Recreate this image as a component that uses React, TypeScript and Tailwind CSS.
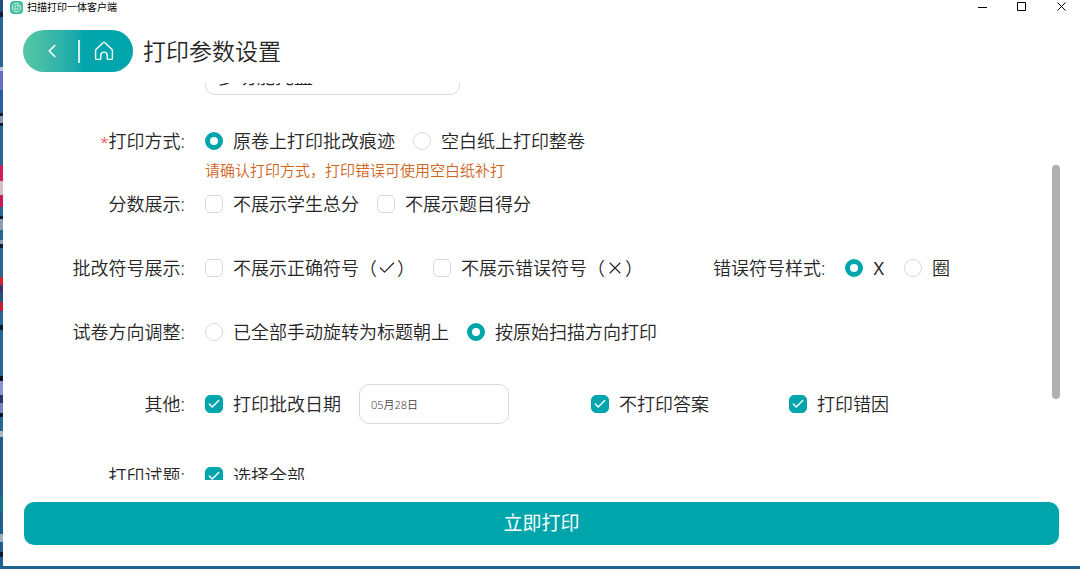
import React from 'react';
import { Check, ChevronLeft, X } from 'lucide-react';

// Sliver of the desktop that shows to the left of the window
const desktop = [
  'h-[12px] bg-[#1d4f80]',
  'h-[5px] bg-[#101c33]',
  'h-[50px] bg-[#2a6496]',
  'h-[4px] bg-[#b9c4dc]',
  'h-[19px] bg-[#6570c4]',
  'h-[23px] bg-[#2b5f9b]',
  'h-[3px] bg-[#0d1b33]',
  'h-[7px] bg-[#8496ad]',
  'h-[3px] bg-[#0d1b33]',
  'h-[39px] bg-[#256795]',
  'h-[16px] bg-[#d01c5c]',
  'h-[14px] bg-[#d9bccb]',
  'h-[12px] bg-[#c8185a]',
  'h-[9px] bg-[#256795]',
  'h-[3px] bg-[#0d1b33]',
  'h-[11px] bg-[#8a9db3]',
  'h-[10px] bg-[#256795]',
  'h-[4px] bg-[#8a9db3]',
  'h-[4px] bg-[#0d1b33]',
  'h-[29px] bg-[#256795]',
  'h-[8px] bg-[#d3222f]',
  'h-[7px] bg-[#3b3464]',
  'h-[10px] bg-[#2b4f80]',
  'h-[9px] bg-[#c41f30]',
  'h-[14px] bg-[#256795]',
  'h-[5px] bg-[#101c2c]',
  'h-[46px] bg-[#256795]',
  'h-[5px] bg-[#0d1326]',
  'h-[14px] bg-[#8f90cf]',
  'h-[8px] bg-[#2a3564]',
  'h-[10px] bg-[#7d82c4]',
  'h-[4px] bg-[#0d1326]',
  'h-[14px] bg-[#256795]',
  'h-[6px] bg-[#a9b7c6]',
  'h-[58px] bg-[#205f8d]',
  'h-[17px] bg-[#12758a]',
  'h-[22px] bg-[#205f8d]',
  'h-[8px] bg-[#9cb0c4]',
  'h-[10px] bg-[#205f8d]',
  'h-[5px] bg-[#0d1b33]',
];

const AppLogo = () => (
  <svg viewBox="0 0 26 26" className="size-[13px]" aria-hidden="true">
    <rect width="26" height="26" rx="8" fill="#45bd9d" />
    <circle cx="13" cy="13" r="8.5" fill="none" stroke="#d8fff2" strokeWidth="2" />
    <path d="M9.5 16.5v-4a3.5 3.5 0 0 1 3.5-3.5h3.5v4a3.5 3.5 0 0 1-3.5 3.5z" fill="none" stroke="#d8fff2" strokeWidth="2" />
  </svg>
);

const HomeIcon = () => (
  <svg viewBox="0 0 20 20" className="size-5" fill="none" stroke="currentColor" strokeWidth="1.4" strokeLinejoin="round" strokeLinecap="round" aria-hidden="true">
    <path d="M9.3 1.6 2.2 8.3c-.4.4-.6.8-.6 1.3v7.6c0 .7.5 1.2 1.2 1.2h3c.6 0 1-.4 1-1v-3.1a3.2 3.2 0 0 1 6.4 0v3.1c0 .6.4 1 1 1h3c.7 0 1.2-.5 1.2-1.2V9.6c0-.5-.2-.9-.6-1.3L10.7 1.6c-.4-.4-1-.4-1.4 0z" />
  </svg>
);

type OptionProps = {
  children: React.ReactNode;
  checked?: boolean;
};

const CheckOption = ({ children, checked }: OptionProps) => (
  <label className="flex items-center gap-[10px]">
    <span className="grid size-[18px] place-items-center">
      <input
        type="checkbox"
        defaultChecked={checked}
        className="peer col-start-1 row-start-1 size-[18px] appearance-none rounded-[5px] border border-[#d9d9d9] bg-white checked:border-[#00a5ac] checked:bg-[#00a5ac]"
      />
      <Check className="pointer-events-none col-start-1 row-start-1 hidden size-[14px] text-white peer-checked:block" strokeWidth={2.5} />
    </span>
    <span className="flex items-center">{children}</span>
  </label>
);

const RadioOption = ({ children, checked, name }: OptionProps & { name: string }) => (
  <label className="flex items-center gap-[10px]">
    <input
      type="radio"
      name={name}
      defaultChecked={checked}
      className="size-[18px] appearance-none rounded-full border border-[#d9d9d9] bg-white checked:border-[5px] checked:border-[#00a5ac]"
    />
    <span>{children}</span>
  </label>
);

const Row = ({ label, required, children }: { label: string; required?: boolean; children: React.ReactNode }) => (
  <div role="group" aria-label={label} className="flex items-center gap-5">
    <span className="w-[138px] shrink-0 text-right">
      {required && <span className="text-[15px] leading-none text-[#f0281e]">*</span>}
      {label}:
    </span>
    <div className="flex flex-1 items-center gap-[18px]">{children}</div>
  </div>
);

export default function App() {
  return (
    <div className="flex h-screen overflow-hidden bg-[#1f6391] pb-[3px] font-['Noto_Sans','Noto_Sans_CJK_SC',sans-serif] font-[350] text-[#262626]">
      <div className="w-[3px] shrink-0 overflow-hidden" aria-hidden="true">
        {desktop.map((cls, i) => (
          <div key={i} className={cls} />
        ))}
      </div>

      <main className="flex min-w-0 flex-1 flex-col bg-white">
        <div className="flex h-[14px] items-center justify-between pr-3 pl-[7px]">
          <div className="flex items-center gap-1 text-[10px] leading-[14px] font-normal text-black">
            <AppLogo />
            <span>扫描打印一体客户端</span>
          </div>
          <div className="flex items-center gap-7 text-black">
            <button aria-label="最小化">
              <svg viewBox="0 0 12 12" className="size-3" stroke="currentColor"><path d="M2 6.5h9" /></svg>
            </button>
            <button aria-label="最大化">
              <svg viewBox="0 0 12 12" className="size-3" fill="none" stroke="currentColor"><path d="M1.5 1.5h8v8h-8z" /></svg>
            </button>
            <button aria-label="关闭">
              <svg viewBox="0 0 12 12" className="size-3" stroke="currentColor"><path d="m1.5 1.5 8 8M9.5 1.5l-8 8" /></svg>
            </button>
          </div>
        </div>

        <header className="flex items-center gap-[10px] pt-4 pb-[11px] pl-5">
          <nav className="flex h-[42px] w-[110px] items-center justify-between rounded-full bg-linear-to-r from-[#55c8a2] to-[#00a5ac] to-55% pr-[19px] pl-[18px] text-white">
            <button aria-label="返回">
              <ChevronLeft className="size-[22px]" strokeWidth={1.8} />
            </button>
            <span className="-ml-1 h-[23px] w-[2px] bg-white/80" />
            <button aria-label="首页" className="-ml-1">
              <HomeIcon />
            </button>
          </nav>
          <h1 className="text-[23px] leading-8">打印参数设置</h1>
        </header>

        <div className="flex min-h-0 flex-1">
          <form className="flex-1 overflow-hidden pl-[44px] text-[18px] leading-6">
            <div className="-mt-7 pl-[158px]">
              <select aria-label="纸盒" className="h-10 w-[255px] appearance-none rounded-[10px] border border-[#d9d9d9] bg-white px-3 pt-1 text-[19px]">
                <option>多功能托盘</option>
              </select>
            </div>

            <div className="mt-[34px]">
              <Row label="打印方式" required>
                <RadioOption name="mode" checked>原卷上打印批改痕迹</RadioOption>
                <RadioOption name="mode">空白纸上打印整卷</RadioOption>
              </Row>
              <p className="mt-2 mb-3 pl-[158px] text-[15px] leading-[19px] text-[#d0651c]">
                请确认打印方式，打印错误可使用空白纸补打
              </p>
              <div className="flex flex-col gap-10">
                <Row label="分数展示">
                  <CheckOption>不展示学生总分</CheckOption>
                  <CheckOption>不展示题目得分</CheckOption>
                </Row>
                <Row label="批改符号展示">
                  <CheckOption>
                    不展示正确符号（<Check className="size-5" strokeWidth={1.5} />）
                  </CheckOption>
                  <CheckOption>
                    不展示错误符号（<X className="size-5" strokeWidth={1.4} />）
                  </CheckOption>
                  <div role="group" aria-label="错误符号样式" className="ml-[52px] flex items-center gap-5">
                    <span>错误符号样式:</span>
                    <RadioOption name="symbol" checked>
                      <span className="font-normal">X</span>
                    </RadioOption>
                    <RadioOption name="symbol">圈</RadioOption>
                  </div>
                </Row>
                <Row label="试卷方向调整">
                  <RadioOption name="direction">已全部手动旋转为标题朝上</RadioOption>
                  <RadioOption name="direction" checked>按原始扫描方向打印</RadioOption>
                </Row>
                <Row label="其他">
                  <CheckOption checked>打印批改日期</CheckOption>
                  <input
                    type="text"
                    aria-label="批改日期"
                    defaultValue="05月28日"
                    className="h-10 w-[150px] rounded-[10px] border border-[#d9d9d9] px-[11px] text-[11px] text-[#444444]"
                  />
                  <div className="ml-16 flex gap-20">
                    <CheckOption checked>不打印答案</CheckOption>
                    <CheckOption checked>打印错因</CheckOption>
                  </div>
                </Row>
                <Row label="打印试题">
                  <CheckOption checked>选择全部</CheckOption>
                </Row>
              </div>
            </div>
          </form>
          <div className="mr-5 w-2 pt-[82px]" aria-hidden="true">
            <div className="h-[234px] rounded-full bg-[#b0b0b0]" />
          </div>
        </div>

        <div className="px-[21px] pt-[22px] pb-[21px]">
          <button className="h-[43px] w-full rounded-[10px] bg-[#00a5ac] text-[19px] font-normal text-white">立即打印</button>
        </div>
      </main>
    </div>
  );
}
